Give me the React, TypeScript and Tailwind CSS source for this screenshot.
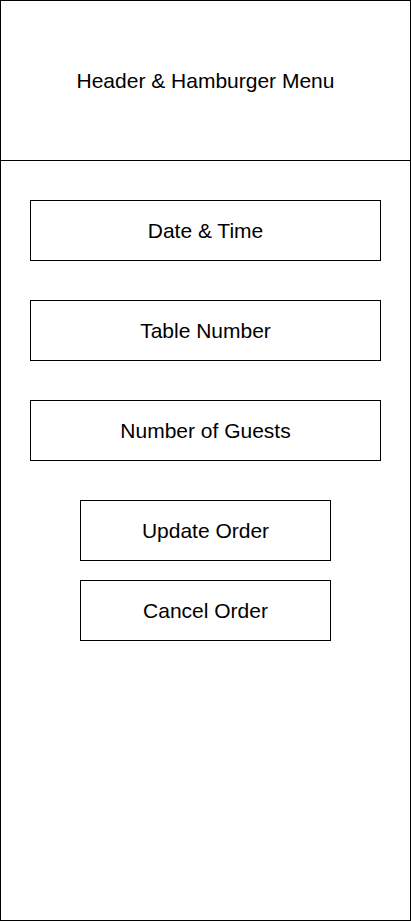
export default function App() {
  const fields = ["Date & Time", "Table Number", "Number of Guests"]
  const actions = ["Update Order", "Cancel Order"]

  return (
    <div className="w-[411px] h-[921px] border border-black bg-white text-black font-['Liberation_Sans',Arial,sans-serif] text-[21px]">
      {/* Header */}
      <div className="h-[160px] border-b border-black flex items-center justify-center">
        Header &amp; Hamburger Menu
      </div>

      {/* Form fields */}
      <div className="pt-[39px] px-[29px] flex flex-col gap-[39px]">
        {fields.map((label) => (
          <div key={label} className="h-[61px] border border-black flex items-center justify-center">
            {label}
          </div>
        ))}
      </div>

      {/* Actions */}
      <div className="pt-[39px] flex flex-col items-center gap-[19px]">
        {actions.map((label) => (
          <div key={label} className="w-[251px] h-[61px] border border-black flex items-center justify-center">
            {label}
          </div>
        ))}
      </div>
    </div>
  )
}
